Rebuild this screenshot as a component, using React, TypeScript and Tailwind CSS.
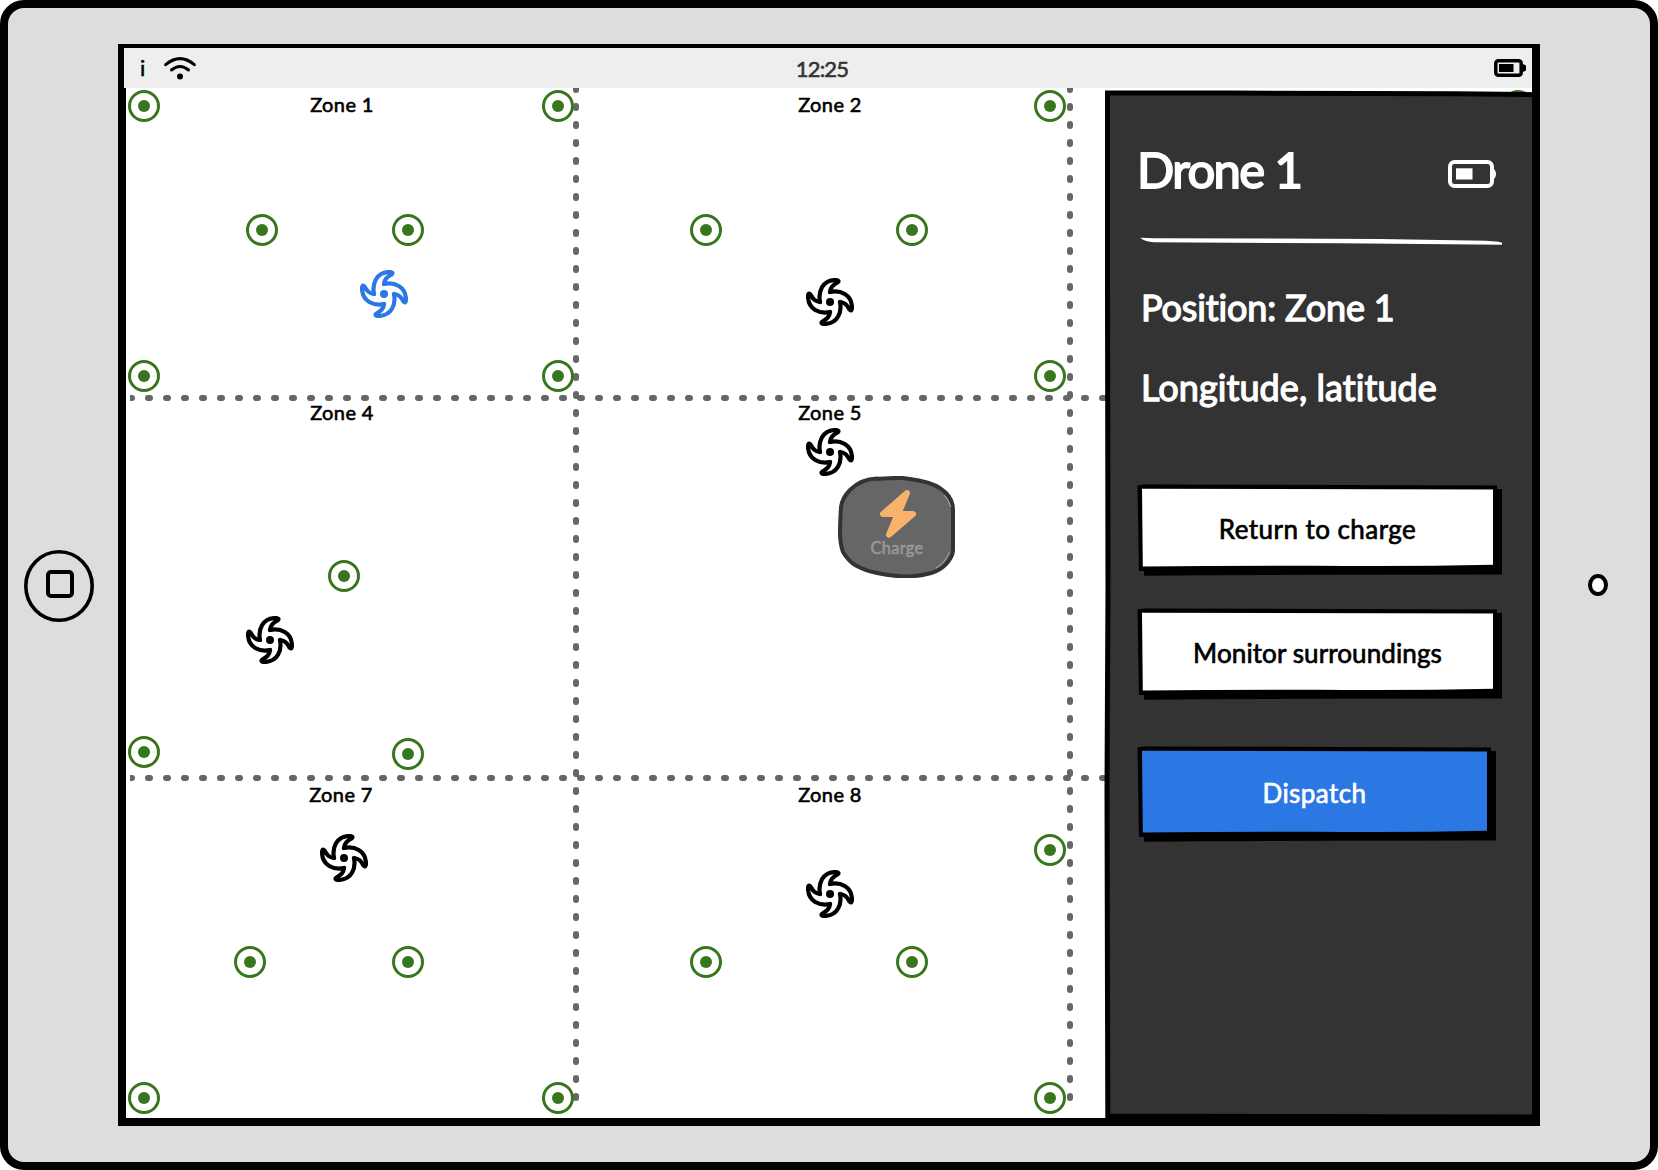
import React from "react";

type Point = { x: number; y: number };
type Drone = Point & { active?: boolean };
type Zone = Point & { name: string };

// Coordinates are measured from the top left corner of the map.
const beacons: Point[] = [
  { x: 18, y: 18 },
  { x: 432, y: 18 },
  { x: 136, y: 142 },
  { x: 282, y: 142 },
  { x: 18, y: 288 },
  { x: 432, y: 288 },
  { x: 580, y: 142 },
  { x: 786, y: 142 },
  { x: 924, y: 18 },
  { x: 924, y: 288 },
  { x: 218, y: 488 },
  { x: 18, y: 664 },
  { x: 282, y: 666 },
  { x: 924, y: 762 },
  { x: 124, y: 874 },
  { x: 282, y: 874 },
  { x: 580, y: 874 },
  { x: 786, y: 874 },
  { x: 18, y: 1010 },
  { x: 432, y: 1010 },
  { x: 924, y: 1010 },
  { x: 1392, y: 18 },
];

const drones: Drone[] = [
  { x: 258, y: 206, active: true },
  { x: 704, y: 214 },
  { x: 704, y: 364 },
  { x: 144, y: 552 },
  { x: 218, y: 770 },
  { x: 704, y: 806 },
];

const zones: Zone[] = [
  { name: "Zone 1", x: 216, y: 16 },
  { name: "Zone 2", x: 704, y: 16 },
  { name: "Zone 4", x: 216, y: 324 },
  { name: "Zone 5", x: 704, y: 324 },
  { name: "Zone 7", x: 215, y: 706 },
  { name: "Zone 8", x: 704, y: 706 },
];

const BLADE = "M-10 0C-12 -10 -8 -22 6 -22Q10 -21.5 7.5 -19.5C3 -17 0.5 -15 0 -10";

function DroneIcon({ active }: { active?: boolean }) {
  return (
    <svg
      width="48"
      height="48"
      viewBox="-24 -24 48 48"
      fill="none"
      stroke="currentColor"
      strokeWidth="4.2"
      strokeLinecap="round"
      strokeLinejoin="round"
      className={active ? "text-[#2b78e4]" : "text-black"}
    >
      {[0, 90, 180, 270].map((a) => (
        <path key={a} d={BLADE} transform={`rotate(${a})`} />
      ))}
      <circle r="4" fill="currentColor" stroke="none" />
    </svg>
  );
}

function Beacon() {
  return (
    <div className="flex size-8 items-center justify-center rounded-full border-[3px] border-[#38761d]">
      <div className="size-3 rounded-full bg-[#38761d]" />
    </div>
  );
}

function At({ x, y, children }: Point & { children: React.ReactNode }) {
  return (
    <div className="absolute -translate-x-1/2 -translate-y-1/2" style={{ left: x, top: y }}>
      {children}
    </div>
  );
}

function WifiIcon() {
  return (
    <svg width="32" height="24" viewBox="0 0 32 24" fill="none" stroke="#000" strokeWidth="3" strokeLinecap="round">
      <path d="M1.7 8.7Q16 -3.4 30.3 8.7" />
      <path d="M7.5 14Q16 7 24.5 14" />
      <circle cx="16" cy="20.5" r="3" fill="#000" stroke="none" />
    </svg>
  );
}

function StatusBattery() {
  return (
    <svg width="32" height="18" viewBox="0 0 32 18">
      <rect x="1.8" y="1.8" width="25.4" height="14.4" rx="2.5" fill="none" stroke="#000" strokeWidth="3.5" />
      <path d="M28 4.5L32 6.5V11.5L28 13.5Z" />
      <rect x="5" y="5" width="14.5" height="8" />
    </svg>
  );
}

function DroneBattery() {
  return (
    <svg width="48" height="28" viewBox="0 0 48 28">
      <rect x="2" y="2" width="42" height="24" rx="4.5" fill="none" stroke="#fff" strokeWidth="4" />
      <path d="M44 8Q48 9.5 48 14Q48 18.5 44 20Z" fill="#fff" />
      <rect x="8" y="8.3" width="16.5" height="11.2" fill="#fff" />
    </svg>
  );
}

function ChargeStation() {
  return (
    <div className="relative flex h-[102px] w-[118px] justify-center">
      <svg className="absolute inset-0" width="118" height="102" viewBox="838 476 118 102">
        <path
          d="M877 478.6C886 479 893 477.5 902 478C909 478.5 915 480 921 481C929 482.5 938 485 946 493C950 497 953 502 953 510V550C953 556 948 563 943 567C938 571 934 573 927 574C920 576 911 576.5 903 576.5C894 576 886 575 877 573C869 571.5 862 569 855 565C850 562 846 557 843 552C840.5 545 840 540 840 533C840 524 840.5 516 841 507C842 500 845 495 850 490C857 483 865 479 877 478.6Z"
          fill="#666"
          stroke="#333"
          strokeWidth="4"
        />
        <path d="M944 495Q949 500 950.8 507M949.5 552Q945 563 936 568" fill="none" stroke="#ddd" strokeWidth="0.6" />
        <path
          d="M907 493L883 514H897.7L889 534.7L913 514H898.3Z"
          fill="#f9b26b"
          stroke="#f9b26b"
          strokeWidth="6"
          strokeLinejoin="round"
        />
      </svg>
      <span className="relative mt-[60px] text-[16.5px] leading-6 tracking-[0.25px] text-[#999] [-webkit-text-stroke:0.5px]">
        Charge
      </span>
    </div>
  );
}

function ZoneMap() {
  return (
    <main className="relative col-start-1 row-start-1 overflow-hidden bg-white">
      <svg className="absolute inset-0" width="1406" height="1030" fill="none" stroke="#666" strokeWidth="6">
        <clipPath id="grid">
          <rect x="4" y="0" width="1400" height="1014" />
        </clipPath>
        <g strokeDasharray="2 16" strokeLinecap="round" clipPath="url(#grid)">
          <path d="M4 310H1400M4 690H1400M450 0V1014M944 0V1014" />
        </g>
      </svg>
      {beacons.map((b) => (
        <At key={`${b.x}-${b.y}`} {...b}>
          <Beacon />
        </At>
      ))}
      {drones.map((d) => (
        <At key={`${d.x}-${d.y}`} x={d.x} y={d.y}>
          <DroneIcon active={d.active} />
        </At>
      ))}
      {zones.map((z) => (
        <At key={z.name} x={z.x} y={z.y}>
          <span className="block text-[20px] leading-6 tracking-[0.4px] whitespace-nowrap [-webkit-text-stroke:0.6px]">{z.name}</span>
        </At>
      ))}
      <At x={771} y={439}>
        <ChargeStation />
      </At>
    </main>
  );
}

type ButtonProps = { label: string; primary?: boolean; tight?: boolean };

function SketchButton({ label, primary, tight }: ButtonProps) {
  const w = primary ? 353 : 359;
  const h = primary ? 90 : 86;
  return (
    <button
      className={
        primary
          ? "relative flex h-[90px] w-[353px] items-center justify-center text-white"
          : "relative flex h-[86px] w-[359px] items-center justify-center text-black"
      }
    >
      <svg className="absolute inset-0 overflow-visible" width={w} height={h}>
        <path d={`M6 ${h - 6}V${h + 4.8}Q${w / 2} ${h + 3.6} ${w + 5} ${h + 3.6}V4H${w - 6}Z`} />
        <path d={`M-0.5 0.5L6 -0.5L${w} 0.5V${h - 1}L1 ${h}Z`} />
        <path
          d={`M4 3.7L${w - 4} 4.5V${h - 6.2}Q${w * 0.75} ${h - 4.3} ${w / 2} ${h - 5.2}Q${w / 4} ${h - 5.2} 4.8 ${h - 4.5}Z`}
          fill={primary ? "#2b78e4" : "#fff"}
        />
      </svg>
      <span
        className={
          tight
            ? "relative pt-px text-[26px] leading-8 tracking-[0.1px] [-webkit-text-stroke:0.7px]"
            : "relative pt-px text-[26px] leading-8 tracking-[0.45px] [-webkit-text-stroke:0.7px]"
        }
      >
        {label}
      </span>
    </button>
  );
}

function DronePanel() {
  return (
    <aside className="relative z-10 col-start-1 row-start-1 h-[1030px] w-[428px] justify-self-end pt-[50px] pl-[36px] text-white">
      <svg className="absolute inset-0 overflow-visible" width="428" height="1030">
        <path
          d="M3.5 5L130 5L260 5.5L350 5.800L430.5 6.700V1029L3.800 1028L3 700L4 500L3.5 200Z"
          fill="#333"
          stroke="#000"
          strokeWidth="5"
        />
      </svg>
      <div className="relative flex flex-col">
        <header className="flex h-[64px] w-[356px] items-center justify-between">
          <h1 className="-mt-[3px] -ml-[3px] text-[49px] leading-[64px] tracking-[-1.6px] [-webkit-text-stroke:1.8px]">Drone 1</h1>
          <div className="mt-2">
            <DroneBattery />
          </div>
        </header>
        <svg className="mt-[35px]" width="362" height="9" viewBox="0 0 362 9">
          <path d="M0 0.8L14 1.3L130 1.5L240 2L346 3.8Q358 4.5 362 5.7V7.7L200 6.3L14 5.3Q5 5 0 0.8Z" fill="#fff" />
        </svg>
        <p className="mt-[37px] ml-[1px] text-[36px] leading-[48px] tracking-[-0.15px] [font-variant-ligatures:none] [-webkit-text-stroke:1.3px]">
          Position: Zone 1
        </p>
        <p className="mt-[32px] ml-[1px] text-[36px] leading-[48px] tracking-[0.08px] [font-variant-ligatures:none] [-webkit-text-stroke:1.3px]">
          Longitude, latitude
        </p>
        <div className="mt-[74px] -ml-[2px] flex flex-col gap-[38px]">
          <SketchButton label="Return to charge" />
          <SketchButton label="Monitor surroundings" tight />
        </div>
        <div className="mt-[52px] -ml-[2px]">
          <SketchButton label="Dispatch" primary />
        </div>
      </div>
    </aside>
  );
}

export default function App() {
  return (
    <div className="h-[1170px] w-[1658px] overflow-hidden bg-white font-['Lato','Open_Sans',sans-serif] text-black">
      <div className="flex h-full w-full rounded-[24px] border-8 border-black bg-[#ddd]">
        <div className="flex w-[110px] items-center pl-4">
          <svg width="70" height="72" viewBox="0 0 70 72" fill="none" stroke="#000" className="mt-[2px]">
            <ellipse cx="35" cy="36" rx="33.2" ry="34.2" strokeWidth="3.6" />
            <rect x="24" y="22" width="24" height="24" rx="3" strokeWidth="4" />
          </svg>
        </div>
        <div className="mt-9 flex h-[1082px] w-[1422px] flex-col border-x-8 border-t-4 border-b-8 border-black">
          <header className="-ml-[2px] grid h-10 shrink-0 grid-cols-3 items-center bg-[#eee] pr-[6px]">
            <div className="flex items-center gap-[19px] pl-4">
              <span className="text-[22px] leading-6 [-webkit-text-stroke:0.5px]">i</span>
              <WifiIcon />
            </div>
            <time className="mr-[6px] justify-self-center pt-px text-[22px] leading-6 tracking-[-0.8px] text-[#333] [-webkit-text-stroke:0.6px]">
              12:25
            </time>
            <div className="justify-self-end">
              <StatusBattery />
            </div>
          </header>
          <div className="grid flex-1 grid-cols-1 grid-rows-1">
            <ZoneMap />
            <DronePanel />
          </div>
        </div>
        <div className="flex flex-1 items-center pl-12">
          <div className="h-[22px] w-5 rounded-[50%] border-4 border-black bg-white" />
        </div>
      </div>
    </div>
  );
}
